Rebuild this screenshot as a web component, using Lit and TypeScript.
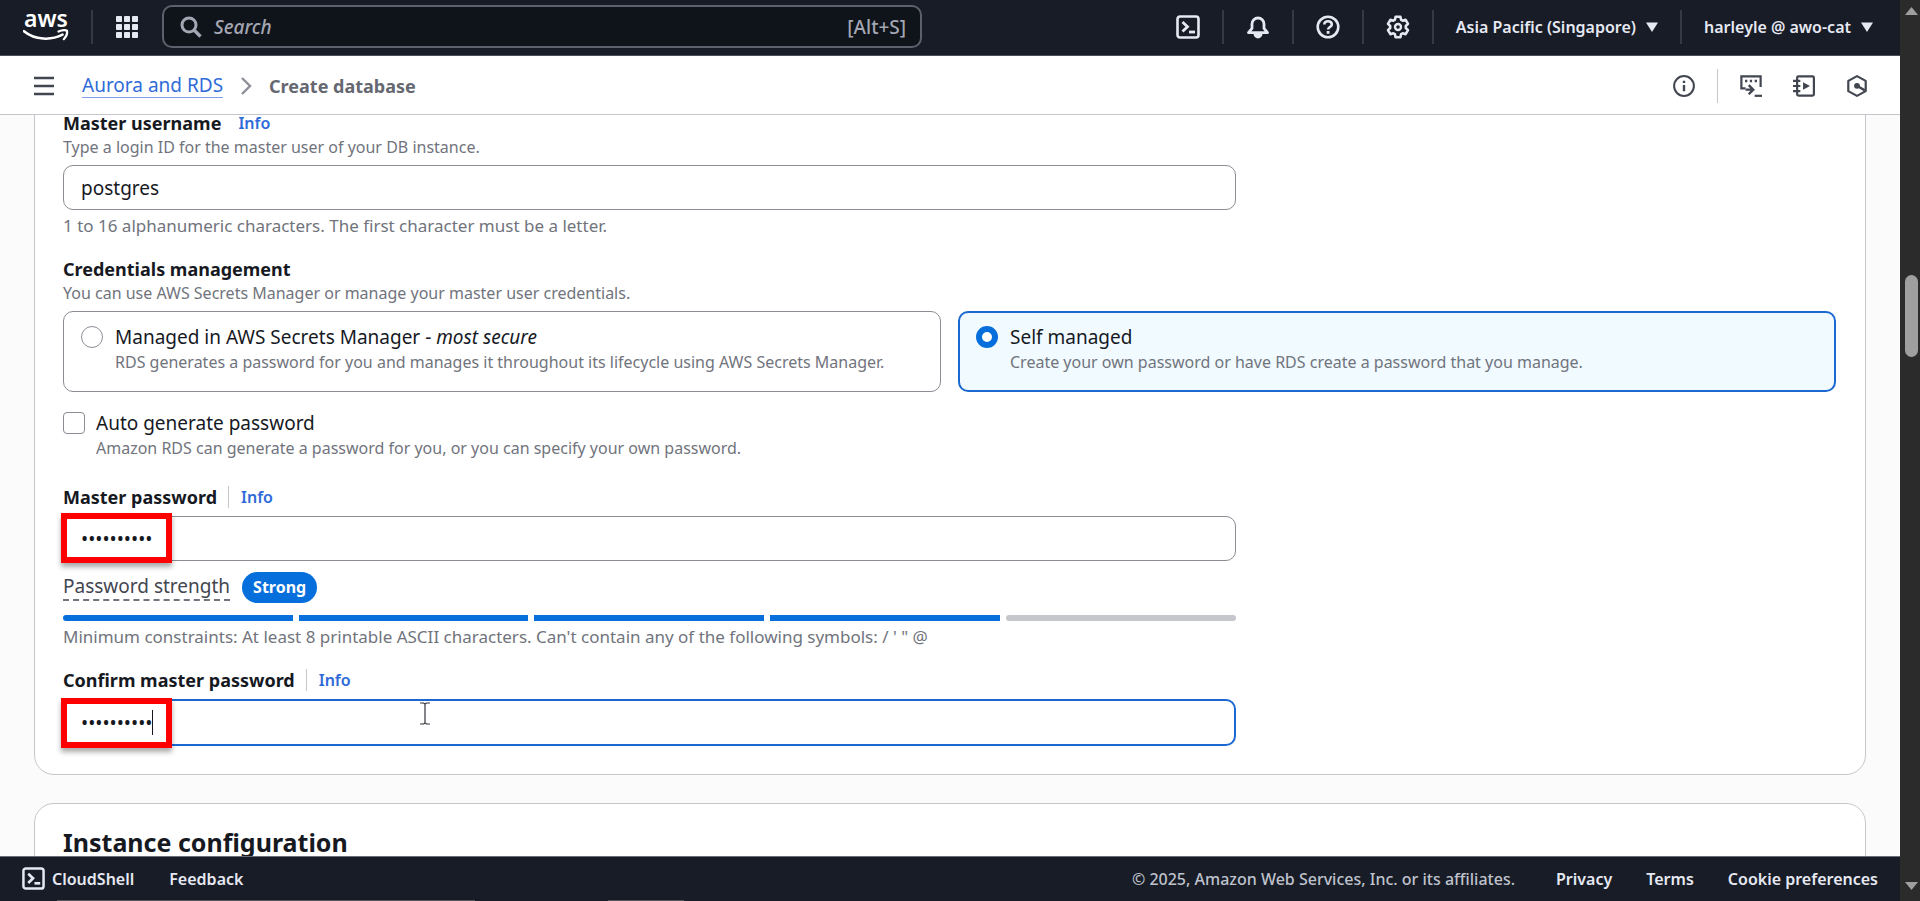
import { LitElement, html, css, svg } from "lit";
import { customElement, state } from "lit/decorators.js";

const shellIcon = html`<svg class="icon" viewBox="0 0 24 24" aria-hidden="true">
  <rect x="1.5" y="1.5" width="21" height="21" rx="2.5" fill="none" stroke="currentColor" stroke-width="2.6" />
  <path d="M6.5 7l5 4.8-5 4.8" fill="none" stroke="currentColor" stroke-width="2.8" />
  <path d="M13 17h6" stroke="currentColor" stroke-width="2.8" />
</svg>`;

const bellIcon = html`<svg class="icon" viewBox="0 0 24 24" aria-hidden="true">
  <path d="M2.500 17.700h19L18 13.400V9a6 6 0 0 0-12 0v4.400z" fill="none" stroke="currentColor" stroke-width="2.800" stroke-linejoin="round" />
  <path d="M7.500 18.500h9a4.500 5 0 0 1-9 0z" fill="currentColor" />
</svg>`;

const helpIcon = html`<svg class="icon" viewBox="0 0 24 24" aria-hidden="true">
  <circle cx="12" cy="12" r="10.3" fill="none" stroke="currentColor" stroke-width="2.6" />
  <path d="M8.300 9.600c0-2.200 1.600-3.400 3.700-3.400s3.800 1.200 3.800 3.200c0 2.600-3.700 2.600-3.700 5.200" fill="none" stroke="currentColor" stroke-width="2.600" />
  <path d="M10.700 16h2.800v2.800h-2.800z" fill="currentColor" />
</svg>`;

const gearIcon = html`<svg class="icon" viewBox="0 0 24 24" aria-hidden="true">
  <path d="M9.600 1.800h4.800l.7 3 1.600.9 2.900-.9 2.400 4.100-2.200 2.100v2l2.200 2.100-2.400 4.100-2.900-.9-1.600.9-.7 3H9.600l-.7-3-1.600-.9-2.900.9L2 15.100l2.200-2.100v-2L2 8.900l2.400-4.100 2.900.9 1.600-.9z" fill="none" stroke="currentColor" stroke-width="2.600" stroke-linejoin="round" />
  <circle cx="12" cy="12" r="3" fill="none" stroke="currentColor" stroke-width="2.400" />
</svg>`;

const infoIcon = html`<svg class="icon" viewBox="0 0 24 24" aria-hidden="true">
  <circle cx="12" cy="12" r="10.800" fill="none" stroke="currentColor" stroke-width="2.200" />
  <path d="M12 11v6.800M12 6.200v2.600" stroke="currentColor" stroke-width="2.600" />
</svg>`;

const consoleIcon = html`<svg class="icon" viewBox="0 0 24 24" aria-hidden="true">
  <path d="M6 14.500H1.500v-13h21V13" fill="none" stroke="currentColor" stroke-width="2.400" />
  <path d="M5.500 6.500h2.500M10.700 6.500h2.500M16 6.500h2.500" stroke="currentColor" stroke-width="2.600" />
  <path d="M6 16h7.500M9.500 11l5 5-5 5" fill="none" stroke="currentColor" stroke-width="2.600" />
  <path d="M16 22.700h8" stroke="currentColor" stroke-width="2.400" />
</svg>`;

const notebookIcon = html`<svg class="icon" viewBox="0 0 24 24" aria-hidden="true">
  <rect x="4.500" y="1.500" width="18.300" height="21" rx="1.500" fill="none" stroke="currentColor" stroke-width="2.400" />
  <path d="M0 6.500h8M0 12h8M0 17.500h8" stroke="currentColor" stroke-width="2.400" />
  <path d="M11 8l7.500 4-7.500 4z" fill="currentColor" />
</svg>`;

const hexIcon = html`<svg class="icon" viewBox="0 0 24 24" aria-hidden="true">
  <path d="M12 1.200l9.500 5.200v11.200L12 22.800l-9.500-5.200V6.400z" fill="none" stroke="currentColor" stroke-width="2.400" stroke-linejoin="round" />
  <circle cx="12" cy="11.800" r="3.200" fill="currentColor" />
  <path d="M12 11.800l8.500 5" stroke="currentColor" stroke-width="2.600" />
</svg>`;

const appsIcon = html`<svg class="icon" viewBox="0 0 24 24" aria-hidden="true">
  ${[1, 9, 17].map((y) => [1, 9, 17].map((x) => svg`<rect x=${x} y=${y} width="6" height="6" rx="0.8" fill="currentColor" />`))}
</svg>`;

const caretIcon = html`<svg class="caret" viewBox="0 0 12 10" aria-hidden="true"><path d="M0 .5h12L6 10z" fill="currentColor" /></svg>`;

@customElement("app-root")
export class AppRoot extends LitElement {
  @state() private managed = false;
  private strength = 4;

  static styles = css`
    :host {
      display: flex;
      height: 100vh;
      overflow: hidden;
      font-family: "Noto Sans", "Open Sans", sans-serif;
      font-size: 16px;
      line-height: 24px;
      color: #16191f;
      background: #fbfbfb;
    }
    * { box-sizing: border-box; }
    button, input { font: inherit; color: inherit; }
    button { padding: 0; border: 0; background: none; cursor: pointer; }
    a { color: #2f6bd8; text-decoration: none; }
    .icon { display: block; width: 24px; height: 24px; }
    .page { flex: 1; min-width: 0; display: flex; flex-direction: column; }

    .topbar {
      flex: none; display: flex; align-items: center; height: 56px; padding: 0 27px 2px 22px;
      background: #171c26; color: #e6e8f2; border-bottom: 1px solid #4a4e57;
      font-weight: 600;
    }
    .logo { display: flex; flex-direction: column; align-items: center; width: 48px; height: 36px; color: #fff; }
    .logo-word { font-size: 23px; line-height: 18px; height: 20px; font-weight: 600; }
    .smile { width: 46px; height: 13px; }
    .rule { width: 2px; height: 34px; background: #343a45; }
    .logo + .rule { margin-left: 21px; }
    .apps { margin: 0 23px 0 22px; }
    .search {
      display: flex; align-items: center; width: 760px; height: 43px; padding: 0 14px 0 16px;
      border: 2px solid #5d616b; border-radius: 10px; background: #0f131a; color: #a4a7b3; font-weight: 500;
    }
    .search svg { width: 22px; height: 22px; margin-right: 12px; }
    .search input { flex: 1; min-width: 0; border: 0; padding: 0; outline: 0; background: none; font-size: 19px; }
    .search input::placeholder { color: #a4a7b3; font-style: italic; opacity: 1; }
    .shortcut { font-size: 19px; }
    .tools { margin-left: auto; display: flex; align-items: center; gap: 22px; }
    .menu { display: flex; align-items: center; gap: 10px; white-space: nowrap; }
    .caret { width: 12px; height: 10px; }

    .crumbs {
      flex: none; display: flex; align-items: center; height: 59px; padding: 1px 32px 0;
      background: #fff; border-bottom: 1px solid #c6c6cd; color: #424650; font-size: 19px;
    }
    .crumbs nav { display: flex; align-items: center; gap: 17px; margin-left: 26px; }
    .crumbs a { border-bottom: 1px solid #7f9bf0; }
    .crumbs .here { color: #656871; font-size: 18px; font-weight: 700; }
    .chevron { width: 12px; height: 20px; color: #8c8f98; }
    .aids { margin-left: auto; display: flex; align-items: center; gap: 31px; }
    .aids .icon { width: 22px; height: 22px; }
    .aids .rule { width: 1px; background: #c6c6cd; margin: 0 -9px; }

    main { flex: 1; min-height: 0; overflow: hidden; padding: 0 34px; }
    .panel { padding: 22px 29px 28px 28px; background: #fff; border: 1px solid #c6c6cd; border-radius: 20px; }
    .panel + .panel { margin-top: 28px; }
    .scrolled { margin-top: -27px; }
    h2 { margin: 0; font-size: 25px; line-height: 32px; font-weight: 700; }
    .title { display: flex; align-items: center; height: 24px; font-weight: 600; }
    .title label, .title span { font-size: 18px; font-weight: 700; }
    .title a { margin-left: 17px; }
    .title.split a { margin-left: 11px; padding-left: 12px; border-left: 1px solid #c6c6cd; line-height: 22px; }
    .desc { margin: 0; line-height: 24px; color: #71747d; }
    .hint { margin: 4px 0 0; font-size: 17px; line-height: 24px; color: #71747d; }
    .narrow { display: grid; grid-template-columns: 2fr 1fr; column-gap: 14px; }
    .box { position: relative; margin-top: 6px; }
    .split + .box { margin-top: 7px; }
    .box input {
      display: block; width: 100%; height: 45px; padding: 0 17px; border: 1px solid #8c8c94;
      border-radius: 10px; background: #fff; font-size: 19px; outline: 0;
    }
    .box input.active { height: 47px; border: 2px solid #1b69d0; padding: 0 16px; }
    .mark { position: absolute; left: -2px; top: -3px; width: 111px; height: 50px; border: 6px solid #f00; box-shadow: 0 4px 5px #0005; pointer-events: none; }
    .active ~ .mark { top: -1px; }
    .insertion { position: absolute; left: 89px; top: 11px; width: 1px; height: 25px; background: #16191f; }
    .pointer { position: absolute; left: 356px; top: 3px; width: 12px; height: 23px; }

    fieldset { min-width: 0; margin: 19px 0 0; padding: 0; border: 0; }
    legend { padding: 0; }
    .tiles { display: grid; grid-template-columns: 1fr 1fr; gap: 17px; margin-top: 6px; }
    .tile {
      display: flex; gap: 12px; min-height: 81px; padding: 12px 17px 16px; border: 1px solid #8c8c94; border-radius: 10px;
    }
    .tile.on { border: 2px solid #1b69d0; padding: 11px 16px 15px; background: #f0faff; }
    .choice { display: flex; gap: 11px; margin-top: 18px; }
    .tile strong, .choice strong { display: block; font-size: 19px; line-height: 26px; font-weight: 400; }
    small { display: block; font-size: 16px; line-height: 24px; color: #71747d; }
    input[type="radio"], input[type="checkbox"] {
      appearance: none; flex: none; width: 22px; height: 22px; margin: 2px 0 0; border: 1px solid #8c8c94; background: #fff;
    }
    input[type="radio"] { border-radius: 50%; }
    input[type="radio"]:checked { border: 6px solid #066fdb; }
    input[type="checkbox"] { border-radius: 4px; }
    .field { margin-top: 25px; }
    .field.next { margin-top: 19px; }
    .strength { display: flex; align-items: center; gap: 12px; height: 31px; margin-top: 11px; font-size: 19px; color: #424650; }
    .strength abbr { text-decoration: none; border-bottom: 2px dashed #71747d; line-height: 25px; }
    .badge { padding: 0 11px; border-radius: 16px; line-height: 31px; background: #066fdb; color: #fff; font-size: 16px; font-weight: 700; }
    .bars { display: grid; grid-template-columns: repeat(5, 1fr); gap: 6px; margin-top: 12px; }
    .bars i { height: 6px; background: #c6c6cd; }
    .bars i.full { background: #066fdb; }
    .bars i:first-child { border-radius: 3px 0 0 3px; }
    .bars i:last-child { border-radius: 3px; }

    footer {
      flex: none; display: flex; align-items: center; height: 45px; padding: 0 22px 1px;
      background: linear-gradient(90deg, #171c26 3%, #55575d 3% 25%, #171c26 25% 32%, #55575d 32% 36%, #171c26 36%) bottom / 100% 1px no-repeat #171c26;
      color: #e6e8f2; border-top: 1px solid #6b6e77; font-weight: 600;
    }
    footer a { color: inherit; }
    .cloud { display: flex; align-items: center; gap: 7px; margin-right: 35px; }
    .cloud .icon { width: 23px; height: 23px; }
    .legal { margin-left: auto; display: flex; gap: 34px; }
    .legal span { color: #bfc2cc; margin-right: 7px; font-weight: 500; }

    .scroll { flex: none; width: 20px; display: flex; flex-direction: column; justify-content: space-between; align-items: center; padding: 7px 0 11px 2px; background: #2b2b2b; color: #9f9f9f; }
    .scroll svg { width: 13px; height: 8px; }
    .track { flex: 1; width: 13px; padding-top: 260px; }
    .thumb { height: 82px; border-radius: 7px; background: #9f9f9f; }
  `;

  render() {
    return html`
      <div class="page">
        <header class="topbar">
          <a class="logo" href="#" aria-label="AWS home">
            <span class="logo-word">aws</span>
            <svg class="smile" viewBox="0 0 46 13" aria-hidden="true">
              <path d="M1 2.200c11 9 27 9.500 38.500 3.500" fill="none" stroke="currentColor" stroke-width="2.600" stroke-linecap="round" />
              <path d="M35.500 2.500c3.500-1.500 7-1.600 8.500-.7.500 2.500-1 6.200-3.200 8.400" fill="none" stroke="currentColor" stroke-width="2.200" stroke-linecap="round" />
            </svg>
          </a>
          <span class="rule"></span>
          <button class="apps" aria-label="Services">${appsIcon}</button>
          <label class="search">
            <svg viewBox="0 0 22 22" aria-hidden="true"><circle cx="9" cy="9" r="7" fill="none" stroke="currentColor" stroke-width="3" /><path d="M14 14l6.500 6.500" stroke="currentColor" stroke-width="3.400" /></svg>
            <input type="search" placeholder="Search" aria-label="Search" />
            <span class="shortcut">[Alt+S]</span>
          </label>
          <div class="tools">
            <button aria-label="CloudShell">${shellIcon}</button><span class="rule"></span>
            <button aria-label="Notifications">${bellIcon}</button><span class="rule"></span>
            <button aria-label="Help">${helpIcon}</button><span class="rule"></span>
            <button aria-label="Settings">${gearIcon}</button><span class="rule"></span>
            <button class="menu">Asia Pacific (Singapore) ${caretIcon}</button><span class="rule"></span>
            <button class="menu">harleyle @ awo-cat ${caretIcon}</button>
          </div>
        </header>

        <div class="crumbs">
          <button aria-label="Open navigation"><svg class="icon" viewBox="0 0 24 24"><path d="M2 4h20M2 12h20M2 20h20" stroke="currentColor" stroke-width="2.400" /></svg></button>
          <nav aria-label="Breadcrumb">
            <a href="#">Aurora and RDS</a>
            <svg class="chevron" viewBox="0 0 12 20" aria-hidden="true"><path d="M2 2l8 8-8 8" fill="none" stroke="currentColor" stroke-width="2.400" /></svg>
            <span class="here">Create database</span>
          </nav>
          <div class="aids">
            <button aria-label="Info">${infoIcon}</button><span class="rule"></span>
            <button aria-label="Console">${consoleIcon}</button>
            <button aria-label="Tutorials">${notebookIcon}</button>
            <button aria-label="Recommendations">${hexIcon}</button>
          </div>
        </div>

        <main>
          <section class="panel scrolled">
            <div class="narrow">
              <div>
                <div class="title"><label for="user">Master username</label><a href="#">Info</a></div>
                <p class="desc">Type a login ID for the master user of your DB instance.</p>
                <div class="box"><input id="user" type="text" .value=${"postgres"} /></div>
                <p class="hint">1 to 16 alphanumeric characters. The first character must be a letter.</p>
              </div>
            </div>

            <fieldset>
              <legend class="title"><span>Credentials management</span></legend>
              <p class="desc">You can use AWS Secrets Manager or manage your master user credentials.</p>
              <div class="tiles">
                <label class="tile ${this.managed ? "on" : ""}">
                  <input type="radio" name="cred" .checked=${this.managed} @change=${() => (this.managed = true)} />
                  <span><strong>Managed in AWS Secrets Manager - <em>most secure</em></strong>
                  <small>RDS generates a password for you and manages it throughout its lifecycle using AWS Secrets Manager.</small></span>
                </label>
                <label class="tile ${this.managed ? "" : "on"}">
                  <input type="radio" name="cred" .checked=${!this.managed} @change=${() => (this.managed = false)} />
                  <span><strong>Self managed</strong>
                  <small>Create your own password or have RDS create a password that you manage.</small></span>
                </label>
              </div>
            </fieldset>

            <label class="choice">
              <input type="checkbox" />
              <span><strong>Auto generate password</strong>
              <small>Amazon RDS can generate a password for you, or you can specify your own password.</small></span>
            </label>

            <div class="narrow">
              <div>
                <div class="field">
                  <div class="title split"><label for="pass">Master password</label><a href="#">Info</a></div>
                  <div class="box"><input id="pass" type="password" .value=${"Password10"} /><span class="mark"></span></div>
                </div>
                <div class="strength"><abbr>Password strength</abbr><span class="badge">Strong</span></div>
                <div class="bars">${[0, 1, 2, 3, 4].map((n) => html`<i class=${n < this.strength ? "full" : ""}></i>`)}</div>
                <p class="hint">Minimum constraints: At least 8 printable ASCII characters. Can't contain any of the following symbols: / ' " @</p>
                <div class="field next">
                  <div class="title split"><label for="confirm">Confirm master password</label><a href="#">Info</a></div>
                  <div class="box">
                    <input id="confirm" class="active" type="password" .value=${"Password10"} />
                    <span class="mark"></span><span class="insertion"></span>
                    <svg class="pointer" viewBox="0 0 12 23" aria-hidden="true"><path d="M1 1h3.500l1.500 1 1.500-1H11M6 2v19M1 22h3.500l1.500-1 1.500 1H11" fill="none" stroke="#33363d" stroke-width="1.200" /></svg>
                  </div>
                </div>
              </div>
            </div>
          </section>
          <section class="panel"><h2>Instance configuration</h2></section>
        </main>

        <footer>
          <button class="cloud">${shellIcon}CloudShell</button>
          <a href="#">Feedback</a>
          <div class="legal">
            <span>© 2025, Amazon Web Services, Inc. or its affiliates.</span>
            <a href="#">Privacy</a><a href="#">Terms</a><a href="#">Cookie preferences</a>
          </div>
        </footer>
      </div>
      <div class="scroll" aria-hidden="true">
        <svg viewBox="0 0 13 8"><path d="M0 8h13L6.500 0z" fill="currentColor" /></svg>
        <div class="track"><div class="thumb"></div></div>
        <svg viewBox="0 0 13 8"><path d="M0 0h13L6.500 8z" fill="currentColor" /></svg>
      </div>
    `;
  }
}
